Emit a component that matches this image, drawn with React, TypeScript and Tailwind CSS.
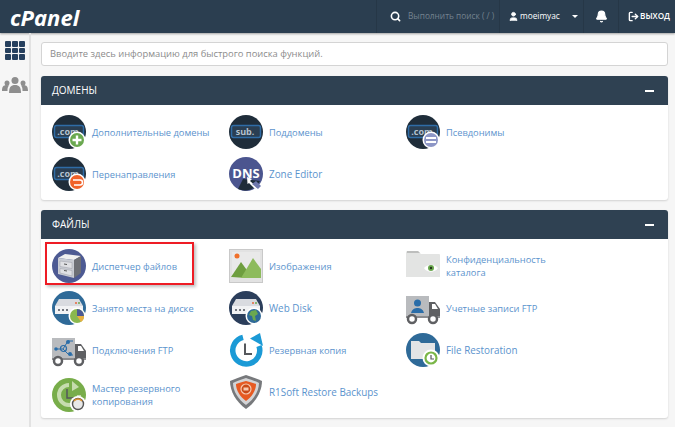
import { Bell, LogOut, Search, User } from "lucide-react";
import type { ReactNode } from "react";

const Svg = ({ children }: { children: ReactNode }) => (
  <svg width="34" height="34" viewBox="0 0 34 34" className="shrink-0">
    {children}
  </svg>
);

const ComBase = ({ label = ".com" }: { label?: string }) => (
  <>
    <circle cx="17" cy="17" r="17" fill="#1f2d3a" />
    <rect x="2.500" y="10.500" width="29" height="12" rx="2" fill="#2a3e52" stroke="#2f6ca6" strokeWidth="1.500" />
    <text x="16" y="19.500" textAnchor="middle" fontSize="9" fontWeight="700" fill="#b4c2cf" fontFamily="Open Sans, sans-serif">
      {label}
    </text>
  </>
);

const AddonIcon = () => (
  <Svg>
    <ComBase />
    <circle cx="25" cy="25" r="8.500" fill="#fff" />
    <circle cx="25" cy="25" r="7" fill="#6aa84f" />
    <path d="M25 20.500v9M20.500 25h9" stroke="#fff" strokeWidth="2.400" />
  </Svg>
);

const SubIcon = () => (
  <Svg>
    <ComBase label="sub." />
  </Svg>
);

const AliasIcon = () => (
  <Svg>
    <ComBase />
    <circle cx="25" cy="25" r="8.500" fill="#fff" />
    <circle cx="25" cy="25" r="7" fill="#8d96c6" />
    <path d="M20 23h10M20 27h10" stroke="#fff" strokeWidth="1.800" />
  </Svg>
);

const RedirectIcon = () => (
  <Svg>
    <ComBase />
    <circle cx="25" cy="25" r="8.500" fill="#fff" />
    <circle cx="25" cy="25" r="7" fill="#f0622a" />
    <path d="M21 23h7a2 2 0 0 1 0 5h-6" fill="none" stroke="#fff" strokeWidth="1.600" />
  </Svg>
);

const DnsIcon = () => (
  <Svg>
    <circle cx="17" cy="17" r="17" fill="#4b558f" />
    <path d="M14 22 31 24A17 17 0 0 1 9 32Z" fill="#1f2d3a" />
    <text x="17" y="21" textAnchor="middle" fontSize="13" fontWeight="700" fill="#fff" fontFamily="Open Sans, sans-serif">
      DNS
    </text>
    <path d="M18 20 23 22 21 24 28 30 26 32 20 26 18.500 27Z" fill="#fff" />
    <path d="M23 27 27 24 32 29 29 32Z" fill="#6f78ad" />
  </Svg>
);

const CabinetIcon = () => (
  <Svg>
    <circle cx="17" cy="17" r="17" fill="#4d5a93" />
    <path d="M6 9 13 5 29 7 22 11Z" fill="#f0f0f0" />
    <path d="M6 9 22 11V29L6 25Z" fill="#c9ccd3" />
    <path d="M22 11 29 7V24L22 29Z" fill="#6d6f75" />
    <path d="M8 12 20 13.500V19.500L8 17.500ZM8 19.500 20 21.500V27L8 24Z" fill="#dfe0e4" stroke="#9a9da6" strokeWidth=".5" />
    <path d="M12 15 15 15.500M12 21.500 15 22" stroke="#555" strokeWidth="1" />
  </Svg>
);

const Server = () => (
  <>
    <path d="M7 8H27L31 15V23H3V15Z" fill="#d9dbe0" />
    <rect x="3" y="15" width="28" height="8" fill="#f1f2f4" />
    <path d="M6 19h2M10 19h2M14 19h2" stroke="#4a4f58" strokeWidth="1.600" />
    <circle cx="24" cy="12" r="1" fill="#e8663a" />
    <circle cx="27" cy="12" r="1" fill="#6aa84f" />
  </>
);

const DiskIcon = () => (
  <Svg>
    <circle cx="17" cy="17" r="17" fill="#2f6a98" />
    <Server />
    <circle cx="25" cy="25" r="8.500" fill="#fff" />
    <circle cx="25" cy="25" r="7" fill="#8ab84e" />
    <path d="M25 25V18A7 7 0 0 1 32 25Z" fill="#4d5a93" />
    <path d="M25 25H32A7 7 0 0 1 29 31Z" fill="#e8b040" />
  </Svg>
);

const WebDiskIcon = () => (
  <Svg>
    <circle cx="17" cy="17" r="17" fill="#2b3e5b" />
    <Server />
    <circle cx="25" cy="25" r="8.500" fill="#fff" />
    <circle cx="25" cy="25" r="7" fill="#2f6a98" />
    <path d="M22 20 27 19 29 23 26 25 27 30 24 29 23 25 20 24Z" fill="#6aa84f" />
  </Svg>
);

const Truck = ({ children }: { children: ReactNode }) => (
  <Svg>
    <rect x="0" y="5" width="23" height="20" fill="#b9bbbe" />
    <path d="M23 11H29L34 18V27H23Z" fill="#5f6063" />
    <path d="M26 13H29L32 18H26Z" fill="#fff" />
    <rect x="0" y="25" width="34" height="2" fill="#8b8c8f" />
    <circle cx="6" cy="28" r="4" fill="#fff" stroke="#5f6063" strokeWidth="2.500" />
    <circle cx="27" cy="28" r="4" fill="#fff" stroke="#5f6063" strokeWidth="2.500" />
    {children}
  </Svg>
);

const ConnectionsIcon = () => (
  <Truck>
    <path d="M4 16H11M11 16 16 8M11 16 17 22M16 8H21M17 22H21" stroke="#2a6da8" strokeWidth="1" fill="none" />
    <circle cx="11.500" cy="15.500" r="3" fill="none" stroke="#2a6da8" strokeWidth="1.200" />
    <circle cx="4" cy="16" r="1.800" fill="#2a6da8" />
    <circle cx="16" cy="9" r="2" fill="#2a6da8" />
    <circle cx="18" cy="21" r="2" fill="#2a6da8" />
  </Truck>
);

const AccountsIcon = () => (
  <Truck>
    <circle cx="11.500" cy="12" r="3.500" fill="#2a6da8" />
    <path d="M5 22c1-4 4-5 6.500-5s5.500 1 6.500 5Z" fill="#2a6da8" />
  </Truck>
);

const BackupIcon = () => (
  <Svg>
    <path d="M14 4.300A13.500 13.500 0 1 0 30 13" fill="none" stroke="#1b9ad6" strokeWidth="5.500" />
    <path d="M21 5.500 31 0 34 13Z" fill="#1b9ad6" />
    <path d="M16 10.500V21H23" fill="none" stroke="#55585c" strokeWidth="2" />
  </Svg>
);

const WizardIcon = () => (
  <Svg>
    <circle cx="17" cy="17" r="17" fill="#78ad4a" />
    <path d="M17 7A10 10 0 1 0 27 17" fill="none" stroke="#c6dcae" strokeWidth="4" />
    <path d="M20 3 27 9 20 13Z" fill="#c6dcae" />
    <path d="M15 11V20H22" fill="none" stroke="#55585c" strokeWidth="1.500" />
    <circle cx="26" cy="26" r="8" fill="#fff" />
    <circle cx="26" cy="26" r="5.500" fill="#e8e8e8" stroke="#555" strokeWidth="1.400" />
    <path d="M22 23A5 5 0 0 1 30 23" fill="none" stroke="#d9902f" strokeWidth="1.500" />
  </Svg>
);

const ShieldIcon = () => (
  <Svg>
    <path d="M17 0C23 2 28 4 33 6 33 16 27 27 17 34 7 27 1 16 1 6 6 4 11 2 17 0Z" fill="#77797c" />
    <path d="M17 3C22 5 27 6 30 8 30 16 25 24 17 30 9 24 4 16 4 8 7 6 12 5 17 3Z" fill="#d3d4d6" />
    <path d="M17 6C21 7 24 8 27 9 27 15 23 22 17 26 11 22 7 15 7 9 10 8 13 7 17 6Z" fill="#e65a22" />
    <circle cx="17" cy="14" r="5" fill="#c94a18" stroke="#f7c9b0" strokeWidth="1.200" />
    <rect x="14.500" y="12.500" width="5" height="3" fill="#f7c9b0" />
  </Svg>
);

const ImagesIcon = () => (
  <Svg>
    <rect x="0.500" y="0.500" width="33" height="33" fill="#e2e2e2" stroke="#c9c9c9" />
    <rect x="3" y="3" width="28" height="26" fill="#e9e9e9" />
    <circle cx="8" cy="7" r="2.500" fill="#f0702a" />
    <path d="M2 28 12 13 20 24 17 29Z" fill="#6e9e3f" />
    <path d="M12 29 24 9 32 20V29Z" fill="#8dbb5c" />
  </Svg>
);

const PrivacyIcon = () => (
  <Svg>
    <path d="M1 2H12L15 5H33A1 1 0 0 1 34 6V28H0V3Z" fill="#e3e4e3" />
    <path d="M1 2H12L14 4H1Z" fill="#bdbebd" />
    <path d="M18 19C21 15 29 15 32 19 29 24 21 24 18 19Z" fill="#fff" />
    <circle cx="25" cy="19" r="3" fill="#6aa84f" />
    <circle cx="25" cy="19" r="1.200" fill="#24351a" />
  </Svg>
);

const RestoreIcon = () => (
  <Svg>
    <circle cx="17" cy="17" r="17" fill="#2f6a98" />
    <path d="M5 8H13L15 10H29V26H5Z" fill="#e3e4e6" />
    <circle cx="25" cy="25" r="8.500" fill="#fff" />
    <circle cx="25" cy="25" r="5.500" fill="none" stroke="#7ab648" strokeWidth="2.200" />
    <path d="M25 22V26H28" fill="none" stroke="#55585c" strokeWidth="1.200" />
  </Svg>
);

const Item = ({
  icon,
  label,
  marked,
  latin,
  low,
}: {
  icon: ReactNode;
  label: string;
  marked?: boolean;
  latin?: boolean;
  low?: boolean;
}) => (
  <a className={`relative flex h-[34px] items-center gap-[6px] ${low ? "-mb-[3px] mt-[3px]" : ""}`}>
    {icon}
    <span className={`w-[130px] leading-[13px] text-[#5b93cd] ${latin ? "text-[9.900px]" : "text-[9.300px]"}`}>{label}</span>
    {marked && (
      <span className="absolute -left-[7px] -top-[7px] h-[43px] w-[149px] border-2 border-[#ee1c25] shadow-[2px_2px_3px_rgba(0,0,0,0.25)]" />
    )}
  </a>
);

const Panel = ({ title, children }: { title: string; children: ReactNode }) => (
  <section className="overflow-hidden rounded-[3px] bg-white shadow-[0_1px_2px_rgba(0,0,0,0.15)]">
    <header className="flex h-[29px] items-center justify-between bg-[#2f4152] pl-[11px] pr-[14px]">
      <h2 className="text-[10px] text-white">{title}</h2>
      <span className="h-[2px] w-[9px] bg-white" />
    </header>
    <div className="grid grid-cols-[177px_177px_177px] gap-y-[8px] pb-[9px] pl-[11px] pt-[10px]">{children}</div>
  </section>
);

export default function App() {
  return (
    <div className="flex h-[427px] w-[675px] flex-col overflow-hidden bg-[#f6f6f6] font-['Open_Sans',sans-serif]">
      <nav className="flex h-[33px] shrink-0 items-center bg-[#2b3e50] shadow-[0_1px_2px_rgba(0,0,0,0.35)]">
        <span className="ml-[10px] text-[22px] font-bold italic leading-none text-white">cPanel</span>
        <div className="ml-auto flex h-full text-white">
          <div className="flex w-[123px] items-center border-l border-[#263747] pl-[13px]">
            <Search size={11} strokeWidth={3.500} className="shrink-0" />
            <span className="ml-[7px] whitespace-nowrap text-[8.300px] text-[#74828f]">Выполнить поиск ( / )</span>
          </div>
          <div className="flex w-[84px] items-center border-l border-[#263747] pl-[8px]">
            <User size={11} fill="#fff" className="shrink-0" />
            <span className="ml-[1px] text-[8.300px]">moeimyac</span>
            <span className="ml-[12px] border-x-[3px] border-t-[3px] border-x-transparent border-t-white" />
          </div>
          <div className="flex w-[35px] items-center justify-center border-l border-[#263747]">
            <Bell size={13} fill="#fff" />
          </div>
          <div className="flex w-[57px] items-center border-l border-[#263747] pl-[9px]">
            <LogOut size={11} strokeWidth={3} className="shrink-0" />
            <span className="ml-[1px] text-[8.200px] font-semibold">ВЫХОД</span>
          </div>
        </div>
      </nav>

      <div className="flex flex-1">
        <aside className="flex w-[31px] shrink-0 flex-col items-center border-r-2 border-[#e2e2e2] pt-[8px]">
          <div className="grid grid-cols-3 gap-[1px]">
            {Array.from({ length: 9 }).map((_, i) => (
              <span key={i} className="h-[5.500px] w-[6px] rounded-[1px] bg-[#26405e]" />
            ))}
          </div>
          <svg width="26" height="16" viewBox="0 0 26 16" className="mt-[17px]" fill="#8e8e8e">
            <circle cx="13" cy="3.500" r="3.500" />
            <path d="M7 16c0-6 2-8 6-8s6 2 6 8Z" />
            <circle cx="5" cy="6" r="2.500" />
            <path d="M0 14c0-4 1-6 5-6 1 0 1.500.2 2 .5C5.500 10 5.500 12 5.500 14Z" />
            <circle cx="21" cy="6" r="2.500" />
            <path d="M26 14c0-4-1-6-5-6-1 0-1.500.2-2 .5 1.500 1.500 1.500 3.500 1.500 5.500Z" />
          </svg>
        </aside>

        <main className="flex-1 pl-[10px] pr-[7px] pt-[9px]">
          <div className="flex h-[24px] items-center rounded-[3px] border border-[#d4d4d4] bg-white px-[8px] text-[9.400px] text-[#8c8c8c]">
            Вводите здесь информацию для быстрого поиска функций.
          </div>
          <div className="mt-[10px] flex flex-col gap-[10px]">
            <Panel title="ДОМЕНЫ">
              <Item icon={<AddonIcon />} label="Дополнительные домены" />
              <Item icon={<SubIcon />} label="Поддомены" />
              <Item icon={<AliasIcon />} label="Псевдонимы" />
              <Item icon={<RedirectIcon />} label="Перенаправления" />
              <Item icon={<DnsIcon />} label="Zone Editor" latin />
            </Panel>
            <Panel title="ФАЙЛЫ">
              <Item icon={<CabinetIcon />} label="Диспетчер файлов" marked />
              <Item icon={<ImagesIcon />} label="Изображения" />
              <Item icon={<PrivacyIcon />} label="Конфиденциальность каталога" />
              <Item icon={<DiskIcon />} label="Занято места на диске" />
              <Item icon={<WebDiskIcon />} label="Web Disk" latin />
              <Item icon={<AccountsIcon />} label="Учетные записи FTP" />
              <Item icon={<ConnectionsIcon />} label="Подключения FTP" />
              <Item icon={<BackupIcon />} label="Резервная копия" />
              <Item icon={<RestoreIcon />} label="File Restoration" latin />
              <Item icon={<WizardIcon />} label="Мастер резервного копирования" low />
              <Item icon={<ShieldIcon />} label="R1Soft Restore Backups" latin />
            </Panel>
          </div>
        </main>
      </div>
    </div>
  );
}
